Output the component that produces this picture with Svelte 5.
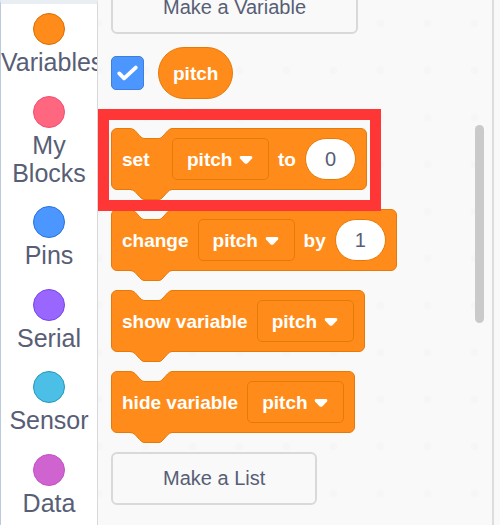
<script>
  const categories = [
    { name: 'Variables', fill: '#ff8c1a', edge: '#db6e00' },
    { name: 'My Blocks', fill: '#ff6680', edge: '#f24f72' },
    { name: 'Pins', fill: '#4c97ff', edge: '#2873dc' },
    { name: 'Serial', fill: '#9966ff', edge: '#7a45ea' },
    { name: 'Sensor', fill: '#4cbfe6', edge: '#2498bd' },
    { name: 'Data', fill: '#cf63cf', edge: '#c94fc9' }
  ];

  const blocks = [
    { label: 'set', joiner: 'to', value: '0', highlighted: true },
    { label: 'change', joiner: 'by', value: '1' },
    { label: 'show variable' },
    { label: 'hide variable' }
  ];

  // Outline shared by the notch on top of a block and the tab below it
  const connector = 'M1 .5 Q4 .7 6 2.500 L10.500 7.500 Q13 10.500 15 10.500 H30 Q32 10.500 34 8 L38.500 3 Q40.500 .7 43 .5';
</script>

<div class="editor">
  <nav class="categories" aria-label="Block categories">
    {#each categories as c}
      <button class="category" type="button">
        <span class="bubble" style:background={c.fill} style:border-color={c.edge}></span>
        <span class="name">{c.name}</span>
      </button>
    {/each}
  </nav>

  <main class="palette">
    <button class="make make-variable" type="button">Make a Variable</button>

    <div class="monitor">
      <span class="tick">
        <input id="show-pitch" type="checkbox" checked />
        <svg viewBox="0 0 34 34" aria-hidden="true"><path d="M8.500 18 L13.500 23 L25.500 12" /></svg>
      </span>
      <label class="reporter" for="show-pitch">pitch</label>
    </div>

    <div class="stack">
      {#each blocks as b}
        <div class="block" class:highlighted={b.highlighted}>
          <svg class="notch" viewBox="0 0 44 12" aria-hidden="true">
            <path class="gap" d="{connector} V0 H1 Z" />
            <path class="line" d={connector} />
          </svg>
          <svg class="tab" viewBox="0 0 44 12" aria-hidden="true">
            <path class="fill" d="{connector} V0 H1 Z" />
            <path class="line" d={connector} />
          </svg>
          <span class="word first">{b.label}</span>
          <span class="picker">
            <select aria-label="{b.label} which variable">
              <option>pitch</option>
            </select>
            <svg viewBox="0 0 14 10" aria-hidden="true"><path d="M2 1 H12 Q14 1.500 13 3.500 L8.500 8.200 Q7 9.500 5.500 8.200 L1 3.500 Q0 1.500 2 1 Z" /></svg>
          </span>
          {#if b.joiner}
            <span class="word">{b.joiner}</span>
            <input class="value" type="text" value={b.value} aria-label="{b.label} value" />
          {/if}
        </div>
      {/each}
    </div>

    <button class="make" type="button">Make a List</button>
    <div class="scrollbar"></div>
  </main>
</div>

<style>
  :global(body) {
    margin: 0;
    background: #f9f9f9;
  }

  .editor,
  .editor :is(button, input, select) {
    font-family: 'Liberation Sans', Arial, Helvetica, sans-serif;
    box-sizing: border-box;
  }

  .editor {
    display: flex;
    min-height: 100vh;
    padding-right: 6px;
    overflow: hidden;
  }

  .categories {
    flex: none;
    box-sizing: border-box;
    width: 98px;
    display: flex;
    flex-direction: column;
    justify-content: space-between;
    padding: 9px 0 8px;
    background: #fff;
    border-left: 1px solid #bccae0;
    border-right: 1px solid #d9d9d9;
    border-top: 4px solid #e9eef2;
    overflow: hidden;
  }

  .category {
    display: flex;
    flex-direction: column;
    align-items: center;
    gap: 3px;
    width: 100%;
    padding: 0;
    border: 0;
    background: none;
    color: #575e75;
    font-size: 25px;
    line-height: 28px;
    overflow: hidden;
  }

  .bubble {
    box-sizing: border-box;
    width: 32px;
    height: 32px;
    border: 1px solid;
    border-radius: 50%;
  }

  .name {
    width: 100%;
    text-align: center;
  }

  .palette {
    flex: 1;
    position: relative;
    display: flex;
    flex-direction: column;
    align-items: flex-start;
    padding-left: 13px;
    border-right: 2px solid #dddddd;
    background: radial-gradient(circle, #f6f6f6 3px, transparent 5px) 24px 0 / 47px 47px #f9f9f9;
  }

  .make {
    height: 53px;
    padding: 0 50px;
    border: 2px solid #d9d9d9;
    border-radius: 6px;
    background: #f9f9f9;
    color: #575e75;
    font-size: 20px;
  }

  .make-variable {
    margin-top: -19px;
  }

  .monitor {
    display: flex;
    align-items: center;
    gap: 14px;
    margin: 13px 0 29px;
  }

  .tick {
    position: relative;
    width: 33px;
    height: 34px;
  }

  .tick input {
    appearance: none;
    display: block;
    width: 100%;
    height: 100%;
    margin: 0;
    border: 1px solid #3d7fdc;
    border-radius: 5px;
  }

  .tick input:checked {
    background: #4c97ff;
  }

  .tick svg {
    position: absolute;
    inset: 0;
    pointer-events: none;
    fill: none;
    stroke: #fff;
    stroke-width: 4;
    stroke-linecap: round;
    stroke-linejoin: round;
  }

  .tick input:not(:checked) + svg {
    display: none;
  }

  .reporter {
    box-sizing: border-box;
    height: 52px;
    padding: 0 14px;
    border: 1px solid #e67a09;
    border-radius: 26px;
    background: #ff8c1a;
    color: #fff;
    font-size: 19px;
    font-weight: bold;
    line-height: 52px;
  }

  .stack {
    display: flex;
    flex-direction: column;
    align-items: flex-start;
    gap: 19px;
    margin-bottom: 19px;
  }

  .block {
    position: relative;
    box-sizing: border-box;
    height: 62px;
    display: flex;
    align-items: center;
    gap: 9px;
    padding: 0 10px;
    border: 1px solid #e67a09;
    border-radius: 6px;
    background: #ff8c1a;
    color: #fff;
    font-size: 19px;
    font-weight: bold;
    white-space: nowrap;
  }

  .notch,
  .tab {
    position: absolute;
    left: 17px;
    width: 44px;
    height: 12px;
  }

  .notch {
    top: -1px;
  }

  .tab {
    top: 60px;
  }

  .gap {
    fill: #f9f9f9;
  }

  .fill {
    fill: #ff8c1a;
  }

  .line {
    fill: none;
    stroke: #e67a09;
  }

  .highlighted::after {
    content: '';
    position: absolute;
    z-index: 1;
    inset: -20px -15px -22px -14px;
    border: 11px solid #ff3636;
    pointer-events: none;
  }

  .word {
    line-height: 24px;
    padding-top: 2px;
  }

  .first {
    min-width: 41px;
  }

  .picker {
    position: relative;
  }

  .picker select {
    appearance: none;
    display: block;
    width: 97px;
    height: 42px;
    padding: 0 0 0 14px;
    border: 1px solid #e67a09;
    border-radius: 5px;
    background: transparent;
    color: inherit;
    font-size: inherit;
    font-weight: inherit;
  }

  .picker svg {
    position: absolute;
    right: 16px;
    top: 17px;
    width: 14px;
    height: 10px;
    fill: #fff;
    pointer-events: none;
  }

  .value {
    width: 51px;
    height: 42px;
    padding: 0;
    border: 1px solid #e67a09;
    border-radius: 21px;
    background: #fff;
    color: #575e75;
    font-size: 20px;
    text-align: center;
  }

  .scrollbar {
    position: absolute;
    right: 8px;
    top: 125px;
    width: 9px;
    height: 198px;
    border-radius: 5px;
    background: #cacaca;
  }
</style>
